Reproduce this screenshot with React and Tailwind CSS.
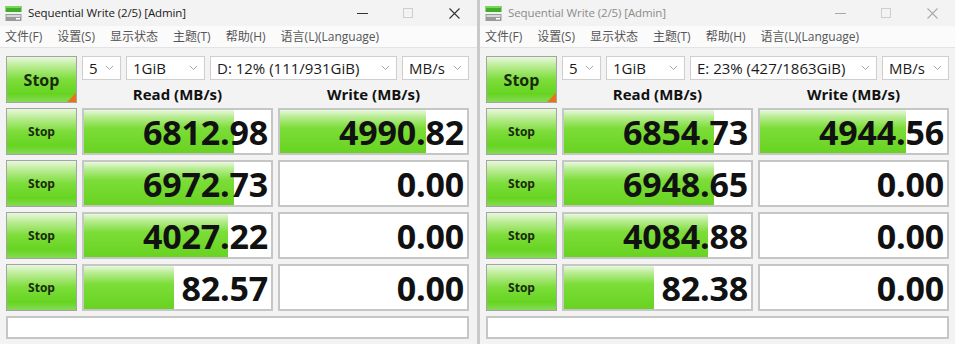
import React from 'react';

const FONT = "font-['Open_Sans','Noto_Sans_CJK_SC',sans-serif]";

const windows = [
  {
    active: true,
    drive: 'D: 12% (111/931GiB)',
    rows: [
      { read: '6812.98', rp: 80, write: '4990.82', wp: 78 },
      { read: '6972.73', rp: 80, write: '0.00', wp: 0 },
      { read: '4027.22', rp: 77, write: '0.00', wp: 0 },
      { read: '82.57', rp: 48, write: '0.00', wp: 0 },
    ],
  },
  {
    active: false,
    drive: 'E: 23% (427/1863GiB)',
    rows: [
      { read: '6854.73', rp: 80, write: '4944.56', wp: 78 },
      { read: '6948.65', rp: 80, write: '0.00', wp: 0 },
      { read: '4084.88', rp: 77, write: '0.00', wp: 0 },
      { read: '82.38', rp: 48, write: '0.00', wp: 0 },
    ],
  },
];

const AppIcon = () => (
  <svg width="17" height="17" viewBox="0 0 17 17">
    <rect x="0.5" y="1" width="16" height="6" fill="#3fae2a" />
    <rect x="0.5" y="1" width="16" height="2" fill="#7fd35e" />
    <rect x="0.5" y="9" width="16" height="7" fill="#9a9a9a" />
    <rect x="1.5" y="10" width="14" height="2" fill="#d8d8d8" />
    <rect x="11" y="13" width="4" height="1.5" fill="#ffffff" />
  </svg>
);

const Chevron = () => (
  <svg width="9" height="6" viewBox="0 0 9 6" className="shrink-0">
    <path d="M1 1 L4.5 4.5 L8 1" fill="none" stroke="#a8a8a8" strokeWidth="1" />
  </svg>
);

const Combo = ({ width, children }) => (
  <div className={`${width} h-[24px] bg-white border border-[#cfcfcf] flex items-center justify-between pl-[6px] pr-[6px] text-[15px] text-[#1b1b1b]`}>
    <span className="whitespace-nowrap">{children}</span>
    <Chevron />
  </div>
);

const Cell = ({ value, pct }) => (
  <div className="relative h-[47px] bg-white border-2 border-[#c6c6c6] overflow-hidden">
    {pct > 0 && (
      <div
        className="absolute left-0 top-0 bottom-0 bg-[linear-gradient(to_bottom,#e8f8dc_0%,#b8ec92_16%,#7cdd38_42%,#68d321_100%)]"
        style={{ width: `${pct}%` }}
      />
    )}
    <div className="relative h-full flex items-center justify-end pr-[3px] text-[34px] font-bold text-[#111] leading-none tracking-[-0.2px]">
      {value}
    </div>
  </div>
);

const StopButton = ({ big }) => (
  <div className={`relative h-[47px] w-[71px] border border-[#a4a4a4] bg-[linear-gradient(to_bottom,#e8f8dc_0%,#b6eb8e_22%,#7ddd3a_50%,#66d421_82%,#86da55_100%)] flex items-center justify-center font-bold text-[#1a2a10] ${big ? 'text-[16px]' : 'text-[12px]'}`}>
    Stop
    {big && (
      <div className="absolute right-0 bottom-0 w-0 h-0 border-l-[9px] border-l-transparent border-b-[9px] border-b-[#e8741a]" />
    )}
  </div>
);

const Window = ({ active, drive, rows, width }) => {
  const menus = ['文件(F)', '设置(S)', '显示状态', '主题(T)', '帮助(H)', '语言(L)(Language)'];
  return (
    <div className={`${width} h-[344px] bg-[#f3f3f3] flex flex-col`}>
      <div className="h-[26px] flex items-center bg-[#f3f3f3]">
        <div className="ml-[5px] mt-[1px]"><AppIcon /></div>
        <div className={`ml-[6px] text-[11.5px] tracking-[-0.1px] ${active ? 'text-[#1a1a1a]' : 'text-[#8c8c8c]'}`}>Sequential Write (2/5) [Admin]</div>
        <div className="ml-auto flex items-center">
          <div className="w-[46px] flex justify-center">
            <div className={`w-[11px] h-[1px] ${active ? 'bg-[#333]' : 'bg-[#aaa]'}`} />
          </div>
          <div className="w-[46px] flex justify-center">
            <div className="w-[10px] h-[10px] border border-[#cfcfcf]" />
          </div>
          <div className="w-[46px] flex justify-center">
            <svg width="11" height="11" viewBox="0 0 11 11">
              <path d="M0.5 0.5 L10.5 10.5 M10.5 0.5 L0.5 10.5" stroke={active ? '#333' : '#aaa'} strokeWidth="1.1" />
            </svg>
          </div>
        </div>
      </div>
      <div className="h-[22px] flex items-center gap-[15px] pl-[5px] bg-[#fbfbfb] border-b border-[#e4e4e4] text-[12px] text-[#555]">
        {menus.map((m) => (
          <span key={m} className="whitespace-nowrap">{m}</span>
        ))}
      </div>
      <div className="flex flex-col gap-[5px] pl-[6px] pt-[8px]">
        <div className="flex gap-[5px]">
          <StopButton big />
          <div className="flex flex-col">
            <div className="flex gap-[5px]">
              <Combo width="w-[39px]">5</Combo>
              <Combo width="w-[79px]">1GiB</Combo>
              <Combo width="w-[187px]">{drive}</Combo>
              <Combo width="w-[67px]">MB/s</Combo>
            </div>
            <div className="grid grid-cols-[191px_191px] gap-[5px] h-[23px] items-end text-[15px] font-bold text-[#111]">
              <div className="text-center leading-none pb-[1px]">Read (MB/s)</div>
              <div className="text-center leading-none pb-[1px]">Write (MB/s)</div>
            </div>
          </div>
        </div>
        {rows.map((r, i) => (
          <div key={i} className="grid grid-cols-[71px_191px_191px] gap-[5px]">
            <StopButton />
            <Cell value={r.read} pct={r.rp} />
            <Cell value={r.write} pct={r.wp} />
          </div>
        ))}
        <div className="w-[463px] h-[23px] bg-white border-2 border-[#c6c6c6]" />
      </div>
    </div>
  );
};

export default function App() {
  return (
    <div className={`w-[955px] h-[344px] flex overflow-hidden ${FONT}`}>
      <Window {...windows[0]} width="w-[477px]" />
      <div className="w-[3px] h-[344px] bg-[#c9c9c9]" />
      <Window {...windows[1]} width="w-[475px]" />
    </div>
  );
}
